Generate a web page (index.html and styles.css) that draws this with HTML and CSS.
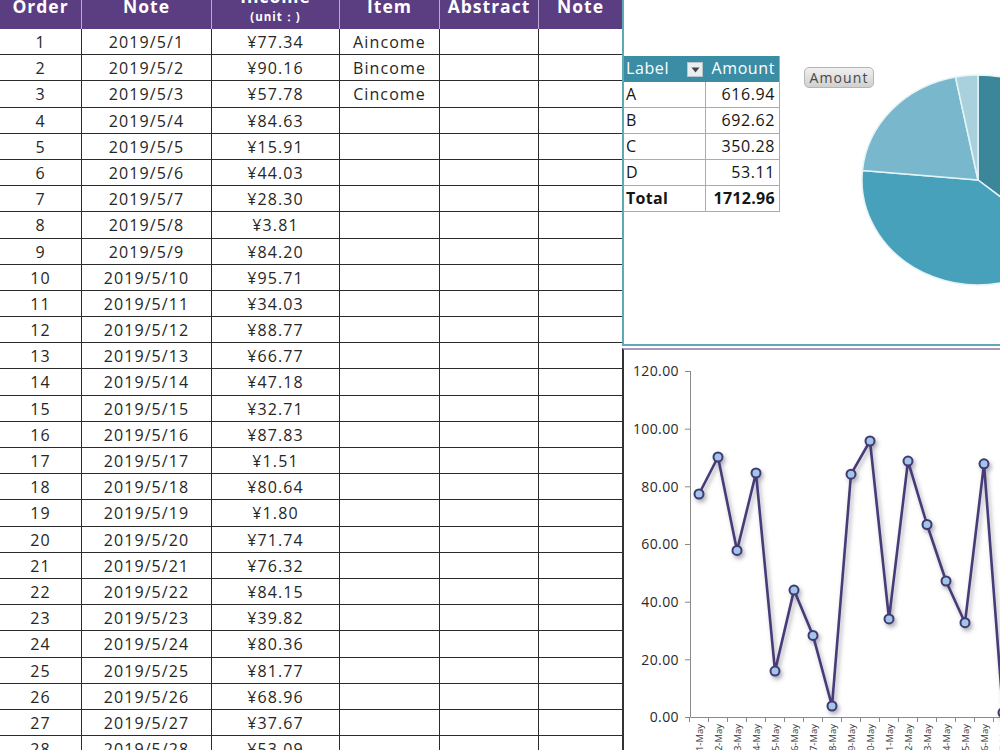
FILE: index.html
```html
<!DOCTYPE html>
<html>
<head>
<meta charset="utf-8">
<link rel="stylesheet" href="styles.css">
</head>
<body>
<div class="sheet">
  <div class="grid">
    <div class="hrow">
      <div class="th"><div class="hl">Order</div></div>
      <div class="th"><div class="hl">Note</div></div>
      <div class="th th-income"><div class="hl">Income</div><div class="unit">(unit：)</div></div>
      <div class="th"><div class="hl">Item</div></div>
      <div class="th"><div class="hl">Abstract</div></div>
      <div class="th"><div class="hl">Note</div></div>
    </div>
    <div class="row"><div class="td">1</div><div class="td">2019/5/1</div><div class="td">¥77.34</div><div class="td">Aincome</div><div class="td"></div><div class="td"></div></div>
    <div class="row"><div class="td">2</div><div class="td">2019/5/2</div><div class="td">¥90.16</div><div class="td">Bincome</div><div class="td"></div><div class="td"></div></div>
    <div class="row"><div class="td">3</div><div class="td">2019/5/3</div><div class="td">¥57.78</div><div class="td">Cincome</div><div class="td"></div><div class="td"></div></div>
    <div class="row"><div class="td">4</div><div class="td">2019/5/4</div><div class="td">¥84.63</div><div class="td"></div><div class="td"></div><div class="td"></div></div>
    <div class="row"><div class="td">5</div><div class="td">2019/5/5</div><div class="td">¥15.91</div><div class="td"></div><div class="td"></div><div class="td"></div></div>
    <div class="row"><div class="td">6</div><div class="td">2019/5/6</div><div class="td">¥44.03</div><div class="td"></div><div class="td"></div><div class="td"></div></div>
    <div class="row"><div class="td">7</div><div class="td">2019/5/7</div><div class="td">¥28.30</div><div class="td"></div><div class="td"></div><div class="td"></div></div>
    <div class="row"><div class="td">8</div><div class="td">2019/5/8</div><div class="td">¥3.81</div><div class="td"></div><div class="td"></div><div class="td"></div></div>
    <div class="row"><div class="td">9</div><div class="td">2019/5/9</div><div class="td">¥84.20</div><div class="td"></div><div class="td"></div><div class="td"></div></div>
    <div class="row"><div class="td">10</div><div class="td">2019/5/10</div><div class="td">¥95.71</div><div class="td"></div><div class="td"></div><div class="td"></div></div>
    <div class="row"><div class="td">11</div><div class="td">2019/5/11</div><div class="td">¥34.03</div><div class="td"></div><div class="td"></div><div class="td"></div></div>
    <div class="row"><div class="td">12</div><div class="td">2019/5/12</div><div class="td">¥88.77</div><div class="td"></div><div class="td"></div><div class="td"></div></div>
    <div class="row"><div class="td">13</div><div class="td">2019/5/13</div><div class="td">¥66.77</div><div class="td"></div><div class="td"></div><div class="td"></div></div>
    <div class="row"><div class="td">14</div><div class="td">2019/5/14</div><div class="td">¥47.18</div><div class="td"></div><div class="td"></div><div class="td"></div></div>
    <div class="row"><div class="td">15</div><div class="td">2019/5/15</div><div class="td">¥32.71</div><div class="td"></div><div class="td"></div><div class="td"></div></div>
    <div class="row"><div class="td">16</div><div class="td">2019/5/16</div><div class="td">¥87.83</div><div class="td"></div><div class="td"></div><div class="td"></div></div>
    <div class="row"><div class="td">17</div><div class="td">2019/5/17</div><div class="td">¥1.51</div><div class="td"></div><div class="td"></div><div class="td"></div></div>
    <div class="row"><div class="td">18</div><div class="td">2019/5/18</div><div class="td">¥80.64</div><div class="td"></div><div class="td"></div><div class="td"></div></div>
    <div class="row"><div class="td">19</div><div class="td">2019/5/19</div><div class="td">¥1.80</div><div class="td"></div><div class="td"></div><div class="td"></div></div>
    <div class="row"><div class="td">20</div><div class="td">2019/5/20</div><div class="td">¥71.74</div><div class="td"></div><div class="td"></div><div class="td"></div></div>
    <div class="row"><div class="td">21</div><div class="td">2019/5/21</div><div class="td">¥76.32</div><div class="td"></div><div class="td"></div><div class="td"></div></div>
    <div class="row"><div class="td">22</div><div class="td">2019/5/22</div><div class="td">¥84.15</div><div class="td"></div><div class="td"></div><div class="td"></div></div>
    <div class="row"><div class="td">23</div><div class="td">2019/5/23</div><div class="td">¥39.82</div><div class="td"></div><div class="td"></div><div class="td"></div></div>
    <div class="row"><div class="td">24</div><div class="td">2019/5/24</div><div class="td">¥80.36</div><div class="td"></div><div class="td"></div><div class="td"></div></div>
    <div class="row"><div class="td">25</div><div class="td">2019/5/25</div><div class="td">¥81.77</div><div class="td"></div><div class="td"></div><div class="td"></div></div>
    <div class="row"><div class="td">26</div><div class="td">2019/5/26</div><div class="td">¥68.96</div><div class="td"></div><div class="td"></div><div class="td"></div></div>
    <div class="row"><div class="td">27</div><div class="td">2019/5/27</div><div class="td">¥37.67</div><div class="td"></div><div class="td"></div><div class="td"></div></div>
    <div class="row"><div class="td">28</div><div class="td">2019/5/28</div><div class="td">¥53.09</div><div class="td"></div><div class="td"></div><div class="td"></div></div>
  </div>

  <div class="side">
    <div class="pivot-panel">
      <div class="pivot">
        <div class="prow phead">
          <div class="pc pl">Label<span class="dd"><svg width="9" height="6" viewBox="0 0 9 6"><path d="M0.5 0.5 L8.5 0.5 L4.5 5.5 Z" fill="#444"/></svg></span></div>
          <div class="pc pr">Amount</div>
        </div>
        <div class="prow"><div class="pc pl">A</div><div class="pc pr">616.94</div></div>
        <div class="prow"><div class="pc pl">B</div><div class="pc pr">692.62</div></div>
        <div class="prow"><div class="pc pl">C</div><div class="pc pr">350.28</div></div>
        <div class="prow"><div class="pc pl">D</div><div class="pc pr">53.11</div></div>
        <div class="prow ptotal"><div class="pc pl">Total</div><div class="pc pr">1712.96</div></div>
      </div>
      <div class="pie-area">
        <div class="legend-btn">Amount</div>
        <svg class="pie" width="330" height="344" viewBox="0 0 330 344">
          <g stroke="#e4f3f7" stroke-width="1.5" stroke-linejoin="round">
            <path d="M198 180 L198 75 A116 105 0 0 1 287.3 247 Z" fill="#3b8699"/>
            <path d="M198 180 L287.3 247 A116 105 0 0 1 82.5 170.45 Z" fill="#48a1ba"/>
            <path d="M198 180 L82.5 170.45 A116 105 0 0 1 175.5 77 Z" fill="#79b8cc"/>
            <path d="M198 180 L175.5 77 A116 105 0 0 1 198 75 Z" fill="#a9d1dd"/>
          </g>
        </svg>
      </div>
    </div>
    <div class="line-panel">
      <svg class="line" width="376" height="400" viewBox="0 0 376 400">
        <defs>
          <filter id="sh" x="-20%" y="-20%" width="140%" height="140%">
            <feDropShadow dx="2" dy="3" stdDeviation="2" flood-color="#5a5a70" flood-opacity="0.5"/>
          </filter>
        </defs>
        <g transform="translate(-624,-350)">
          <g class="ylab" font-size="14" fill="#2a2a2a" text-anchor="end" letter-spacing="0.4">
            <text x="679" y="376">120.00</text>
            <text x="679" y="433.5">100.00</text>
            <text x="679" y="491.5">80.00</text>
            <text x="679" y="549">60.00</text>
            <text x="679" y="606.5">40.00</text>
            <text x="679" y="664.5">20.00</text>
            <text x="679" y="722">0.00</text>
          </g>
          <g stroke="#8a8a8a" stroke-width="1" fill="none">
            <path d="M690.5 371 V717.5 H1000"/>
            <path d="M685 371.5 H690 M685 429.2 H690 M685 486.8 H690 M685 544.5 H690 M685 602.2 H690 M685 659.8 H690 M685 717.5 H690"/>
            <path d="M689.5 717 V722 M708.5 717 V722 M727.5 717 V722 M746.5 717 V722 M765.5 717 V722 M784.5 717 V722 M803.5 717 V722 M822.5 717 V722 M841.5 717 V722 M860.5 717 V722 M879.5 717 V722 M898.5 717 V722 M917.5 717 V722 M936.5 717 V722 M955.5 717 V722 M974.5 717 V722 M993.5 717 V722"/>
          </g>
          <g class="xlab" font-size="9.5" fill="#333" text-anchor="end">
            <text transform="translate(702.5,724) rotate(-90)">1-May</text>
            <text transform="translate(721.5,724) rotate(-90)">2-May</text>
            <text transform="translate(740.5,724) rotate(-90)">3-May</text>
            <text transform="translate(759.5,724) rotate(-90)">4-May</text>
            <text transform="translate(778.5,724) rotate(-90)">5-May</text>
            <text transform="translate(797.5,724) rotate(-90)">6-May</text>
            <text transform="translate(816.5,724) rotate(-90)">7-May</text>
            <text transform="translate(835.5,724) rotate(-90)">8-May</text>
            <text transform="translate(854.5,724) rotate(-90)">9-May</text>
            <text transform="translate(873.5,724) rotate(-90)">10-May</text>
            <text transform="translate(892.5,724) rotate(-90)">11-May</text>
            <text transform="translate(911.5,724) rotate(-90)">12-May</text>
            <text transform="translate(930.5,724) rotate(-90)">13-May</text>
            <text transform="translate(949.5,724) rotate(-90)">14-May</text>
            <text transform="translate(968.5,724) rotate(-90)">15-May</text>
            <text transform="translate(987.5,724) rotate(-90)">16-May</text>
            <text transform="translate(1006.5,724) rotate(-90)">17-May</text>
          </g>
          <g filter="url(#sh)">
            <polyline fill="none" stroke="#473b78" stroke-width="2.6" stroke-linejoin="round"
              points="699,494 718,457 737,550.4 756,473 775,671.1 794,590.1 813,635.4 832,706 851,474.2 870,441 889,618.9 908,461.1 927,524.5 946,581 965,622.7 984,463.8 1003,712.6 1022,484.5"/>
            <g fill="#a4c5ea" stroke="#3e3a72" stroke-width="2">
              <circle cx="699" cy="494" r="4.5"/>
              <circle cx="718" cy="457" r="4.5"/>
              <circle cx="737" cy="550.4" r="4.5"/>
              <circle cx="756" cy="473" r="4.5"/>
              <circle cx="775" cy="671.1" r="4.5"/>
              <circle cx="794" cy="590.1" r="4.5"/>
              <circle cx="813" cy="635.4" r="4.5"/>
              <circle cx="832" cy="706" r="4.5"/>
              <circle cx="851" cy="474.2" r="4.5"/>
              <circle cx="870" cy="441" r="4.5"/>
              <circle cx="889" cy="618.9" r="4.5"/>
              <circle cx="908" cy="461.1" r="4.5"/>
              <circle cx="927" cy="524.5" r="4.5"/>
              <circle cx="946" cy="581" r="4.5"/>
              <circle cx="965" cy="622.7" r="4.5"/>
              <circle cx="984" cy="463.8" r="4.5"/>
              <circle cx="1003" cy="712.6" r="4.5"/>
              <circle cx="1022" cy="484.5" r="4.5"/>
            </g>
          </g>
        </g>
      </svg>
    </div>
  </div>
</div>
</body>
</html>
```

FILE: styles.css
```css
html, body {
  margin: 0;
  padding: 0;
  background: #ffffff;
}
body {
  font-family: "Open Sans", "Noto Sans", sans-serif;
  color: #262626;
}
.sheet {
  display: flex;
  width: 1000px;
  height: 750px;
  overflow: hidden;
}
.grid {
  width: 622px;
  flex: none;
}
.hrow, .row {
  display: grid;
  grid-template-columns: 82px 130px 128px 100px 99px 83px;
}
.hrow {
  height: 29px;
  background: #5b3d82;
  overflow: hidden;
  color: #ffffff;
}
.th {
  border-right: 1px solid #bcaad6;
  text-align: center;
  font-weight: 700;
  font-size: 17.5px;
  letter-spacing: 1px;
}
.th:last-child {
  border-right: none;
}
.th .hl {
  line-height: 20px;
  margin-top: -4.5px;
}
.th-income .hl {
  margin-top: -14.5px;
}
.th .unit {
  font-size: 11.5px;
  line-height: 14px;
  margin-top: 4px;
  letter-spacing: 1px;
}
.row {
  height: 26.2px;
  box-sizing: border-box;
  border-bottom: 1px solid #2b2b2b;
}
.td {
  border-right: 1px solid #2b2b2b;
  text-align: center;
  font-size: 16px;
  line-height: 26px;
  letter-spacing: 1.1px;
  color: #262626;
  white-space: nowrap;
}
.td:last-child {
  border-right: none;
}
.side {
  width: 378px;
  flex: none;
  overflow: hidden;
}
.pivot-panel {
  height: 346px;
  box-sizing: border-box;
  border-left: 2px solid #5ea8b8;
  border-bottom: 2px solid #5ea8b8;
  display: flex;
  align-items: flex-start;
}
.pivot {
  margin-top: 56px;
  width: 155px;
  flex: none;
  border-right: 1px solid #7fbccb;
}
.prow {
  display: grid;
  grid-template-columns: 82px 72px;
  height: 26px;
  box-sizing: border-box;
  border-bottom: 1px solid #7fbccb;
}
.pc {
  font-size: 16px;
  line-height: 25px;
  letter-spacing: 0.6px;
  color: #151515;
  white-space: nowrap;
}
.pl {
  padding-left: 2px;
  border-right: 1px solid #7fbccb;
  position: relative;
}
.pr {
  text-align: right;
  padding-right: 3px;
}
.phead {
  background: #3a8da5;
  border-bottom-color: #3a8da5;
}
.phead .pc {
  color: #ffffff;
}
.phead .pl {
  border-right-color: #3a8da5;
}
.dd {
  position: absolute;
  right: 2px;
  top: 6px;
  width: 16px;
  height: 15px;
  background: #e9eef0;
  border: 1px solid #b9c7cc;
  box-sizing: border-box;
  display: flex;
  align-items: center;
  justify-content: center;
}
.dd svg {
  display: block;
}
.ptotal .pc {
  font-weight: 700;
  letter-spacing: 0.3px;
}
.pie-area {
  position: relative;
  width: 330px;
  height: 344px;
  flex: none;
}
.pie {
  display: block;
}
.legend-btn {
  position: absolute;
  left: 24px;
  top: 67px;
  width: 70px;
  height: 21px;
  box-sizing: border-box;
  border: 1px solid #b5b5b5;
  border-radius: 5px;
  background: linear-gradient(#f0f0f0, #d0d0d0);
  font-size: 14px;
  line-height: 19px;
  letter-spacing: 1.1px;
  color: #474747;
  text-align: center;
}
.line-panel {
  margin-top: 2px;
  height: 402px;
  box-sizing: border-box;
  border-top: 2px solid #a999bd;
  border-left: 2px solid #333333;
}
.line {
  display: block;
}
```
